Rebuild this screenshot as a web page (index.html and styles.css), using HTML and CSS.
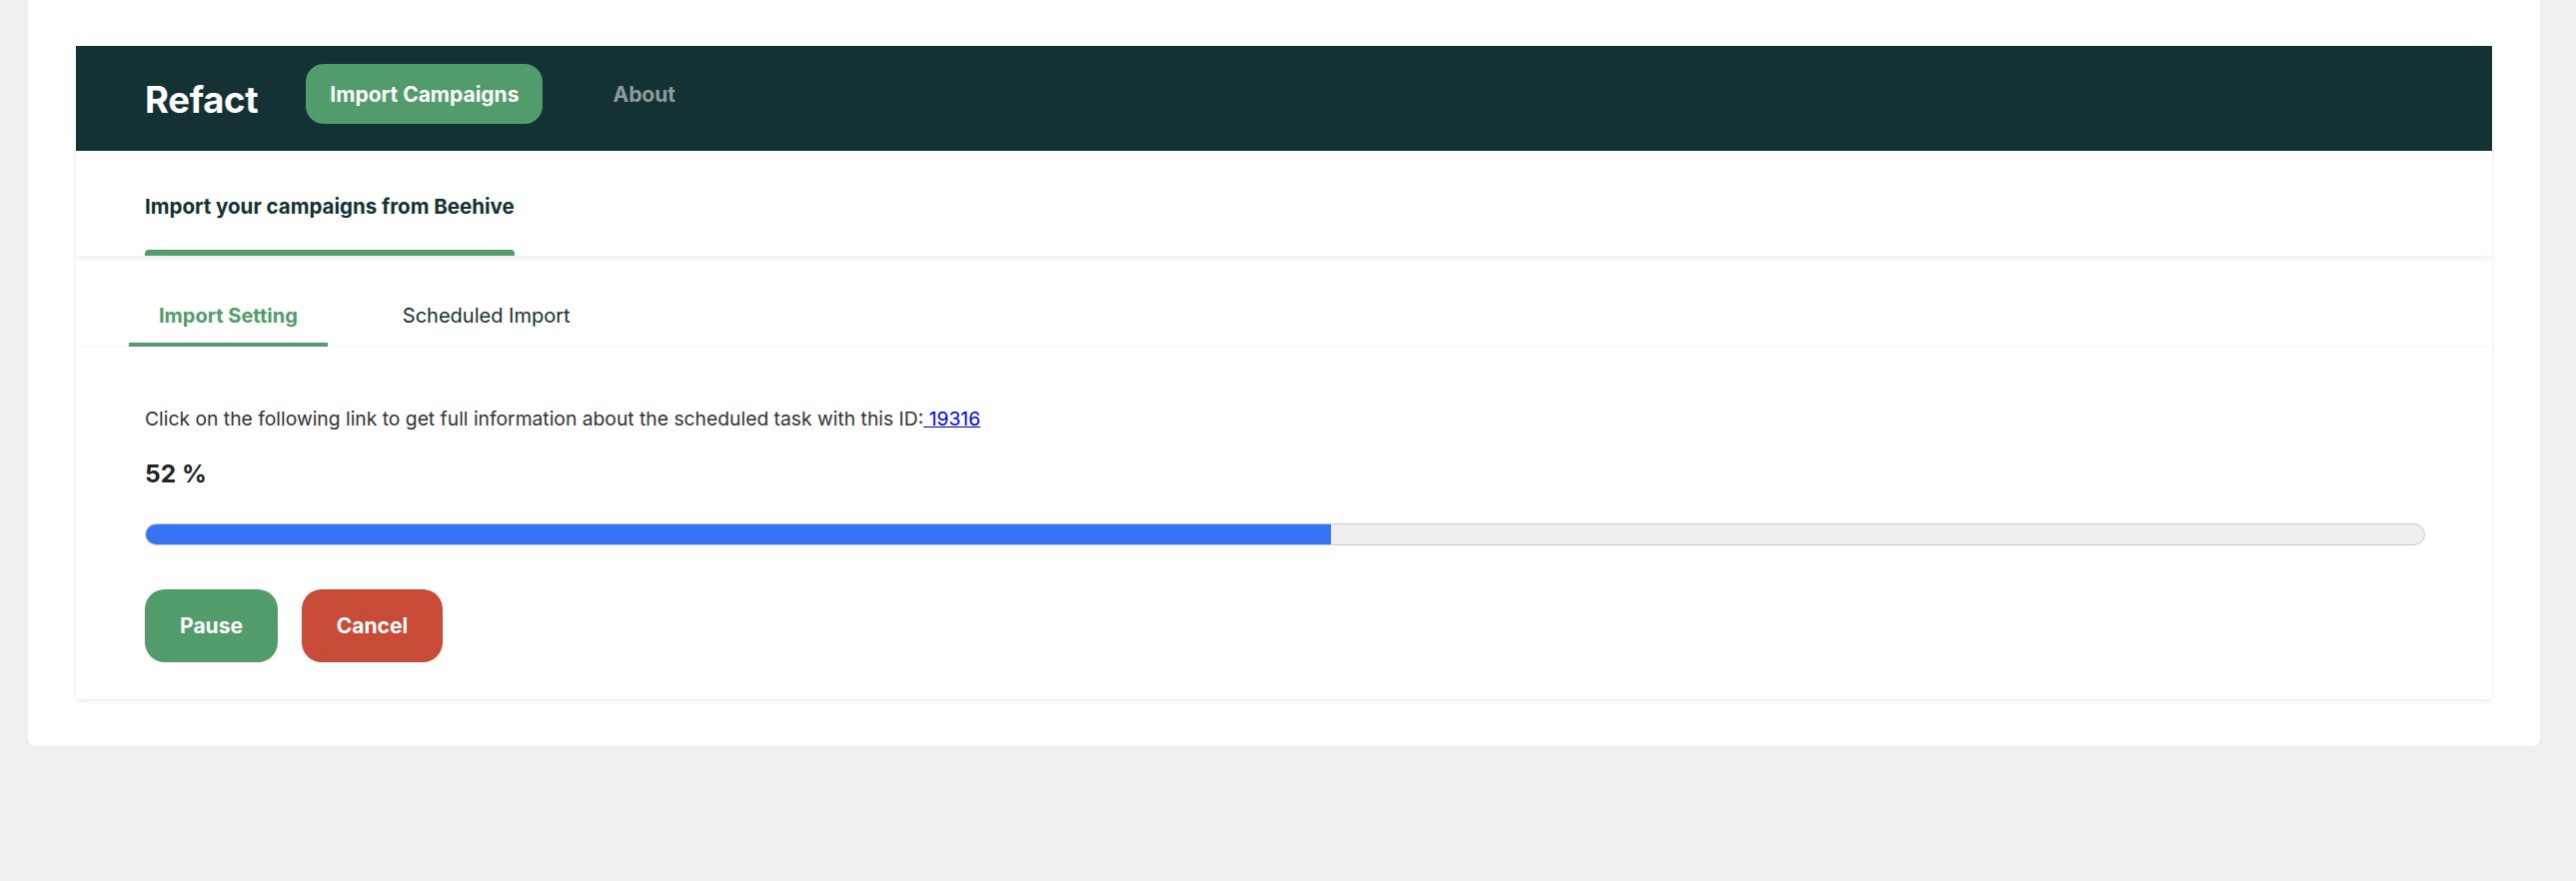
FILE: index.html
```html
<!DOCTYPE html>
<html lang="en">
<head>
<meta charset="utf-8">
<title>Refact - Import Campaigns</title>
<link rel="stylesheet" href="styles.css">
</head>
<body>
<div class="panel">
  <div class="card card-top">
    <header class="topbar">
      <div class="logo">Refact</div>
      <a class="nav-btn active" href="#">Import Campaigns</a>
      <a class="nav-link" href="#">About</a>
    </header>
    <div class="subhead">
      <div class="subtab">
        <span class="subtab-title">Import your campaigns from Beehive</span>
        <span class="subtab-bar"></span>
      </div>
    </div>
  </div>
  <div class="card card-main">
    <nav class="tabs">
      <a class="tab active" href="#">Import Setting</a>
      <a class="tab" href="#">Scheduled Import</a>
    </nav>
    <div class="content">
      <p class="info">Click on the following link to get full information about the scheduled task with this ID:<a class="task-link" href="#"> 19316</a></p>
      <div class="percent">52 %</div>
      <div class="progress"><div class="progress-fill" style="width:52%"></div></div>
      <div class="actions">
        <button class="btn btn-pause">Pause</button>
        <button class="btn btn-cancel">Cancel</button>
      </div>
    </div>
  </div>
</div>
</body>
</html>
```
FILE: styles.css
```css
* { box-sizing: border-box; }
html, body { margin: 0; padding: 0; }
body {
  background: #f0f0f0;
  font-family: Inter, "Noto Sans", "Liberation Sans", sans-serif;
  color: #143133;
}
.panel {
  margin: 0 36px 0 28px;
  background: #ffffff;
  border-radius: 0 0 8px 8px;
  padding: 46px 48px 47px 48px;
}
.card {
  background: #ffffff;
  box-shadow: 0 2px 6px rgba(0, 0, 0, 0.08);
}
.card-top {
  position: relative;
  z-index: 1;
}
.topbar {
  height: 105px;
  background: #143133;
  display: flex;
  align-items: center;
  padding-left: 69px;
}
.logo {
  color: #ffffff;
  font-size: 36.5px;
  font-weight: 700;
  letter-spacing: -0.3px;
  margin-right: 48px;
  margin-top: 2px;
}
.nav-btn {
  display: flex;
  align-items: center;
  height: 60px;
  padding: 0 24px;
  border-radius: 18px;
  background: #529c6b;
  color: #ffffff;
  font-size: 21px;
  font-weight: 700;
  text-decoration: none;
  margin-bottom: 9px;
}
.nav-link {
  color: #8d9c9b;
  font-size: 21px;
  font-weight: 700;
  text-decoration: none;
  margin-left: 70px;
  margin-bottom: 9px;
}
.subhead {
  height: 105px;
  padding: 43px 0 0 69px;
}
.subtab {
  display: inline-flex;
  flex-direction: column;
}
.subtab-title {
  font-size: 20.5px;
  font-weight: 700;
  line-height: 26px;
  color: #143133;
}
.subtab-bar {
  margin-top: 30px;
  height: 6px;
  background: #529c6b;
  border-radius: 4px 4px 0 0;
}
.tabs {
  display: flex;
  gap: 45px;
  padding-left: 53px;
  border-bottom: 1px solid #f6f6f6;
  padding-top: 48px;
}
.tab {
  padding: 0 30px 15px;
  font-size: 20px;
  line-height: 24px;
  color: #143133;
  text-decoration: none;
  border-bottom: 4px solid transparent;
  margin-bottom: -1px;
}
.tab.active {
  color: #529c6b;
  font-weight: 700;
  border-bottom-color: #529c6b;
}
.content {
  padding: 60px 67px 37px 69px;
}
.info {
  margin: 0;
  font-size: 19.3px;
  line-height: 24px;
  color: #333333;
}
.task-link {
  color: #0000ee;
  text-decoration: underline;
}
.percent {
  margin-top: 29px;
  font-size: 24.5px;
  line-height: 28px;
  font-weight: 700;
  color: #222222;
}
.progress {
  margin-top: 36px;
  height: 22px;
  background: #eeeeee;
  border: 1px solid #cccccc;
  border-radius: 11px;
  overflow: hidden;
}
.progress-fill {
  height: 100%;
  background: #3474f4;
}
.actions {
  display: flex;
  gap: 24px;
  margin-top: 44px;
}
.btn {
  height: 73px;
  border: none;
  border-radius: 20px;
  color: #ffffff;
  font-family: inherit;
  font-size: 21px;
  font-weight: 700;
  cursor: pointer;
}
.btn-pause {
  width: 133px;
  background: #529c6b;
}
.btn-cancel {
  width: 141px;
  background: #c84b37;
}
```
